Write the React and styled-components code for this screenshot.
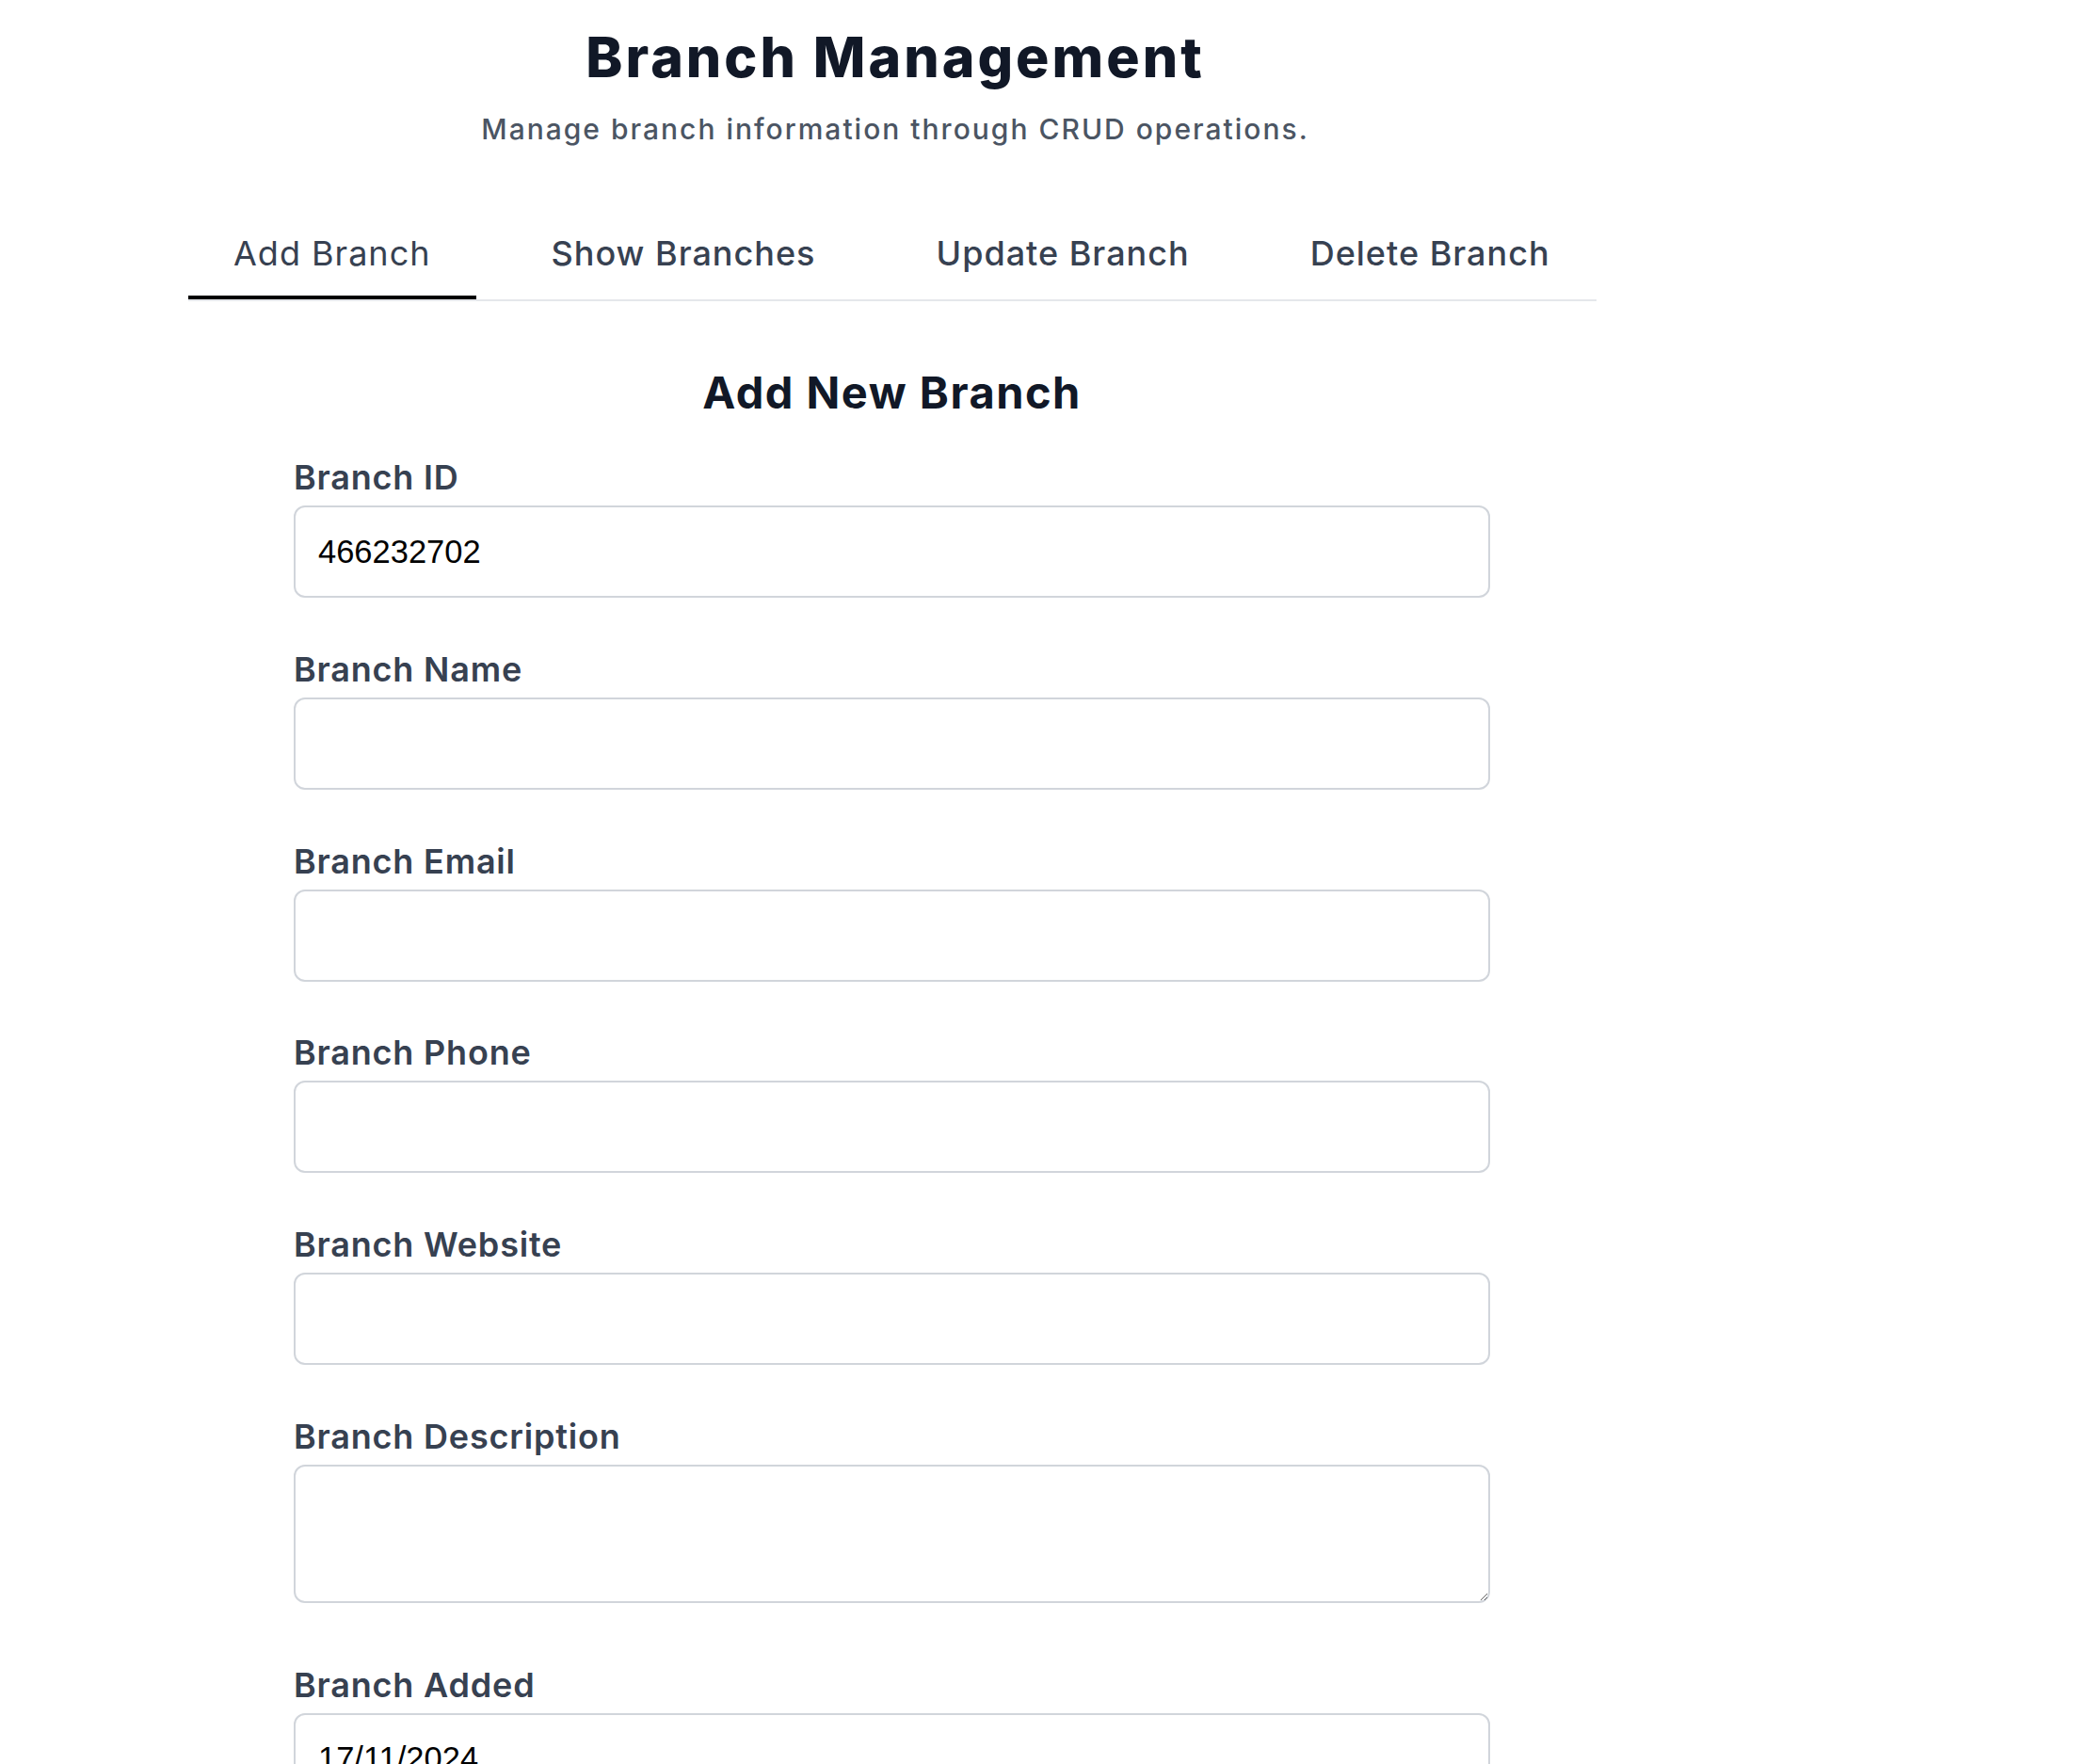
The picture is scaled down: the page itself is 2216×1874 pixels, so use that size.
import React from 'react';
import styled, { createGlobalStyle } from 'styled-components';

const tabs = ['Add Branch', 'Show Branches', 'Update Branch', 'Delete Branch'];

const fields = [
  { label: 'Branch ID', value: '466232702' },
  { label: 'Branch Name', value: '' },
  { label: 'Branch Email', value: '' },
  { label: 'Branch Phone', value: '' },
  { label: 'Branch Website', value: '' },
  { label: 'Branch Description', multiline: true },
  { label: 'Branch Added', value: '17/11/2024' },
];

const App = () => {
  return (
    <>
      <GlobalStyle />
      <Page>
        <Container>
          <Header>
            <Title>Branch Management</Title>
            <Subtitle>Manage branch information through CRUD operations.</Subtitle>
          </Header>

          <TabList>
            {tabs.map((tab, i) => (
              <Tab key={tab} active={i === 0}>
                {tab}
              </Tab>
            ))}
          </TabList>

          <Panel>
            <FormHeading>Add New Branch</FormHeading>
            <Form onSubmit={(e) => e.preventDefault()}>
              {fields.map((f) => (
                <Field key={f.label}>
                  <Label>{f.label}</Label>
                  {f.multiline ? (
                    <TextArea />
                  ) : (
                    <Input type="text" defaultValue={f.value} />
                  )}
                </Field>
              ))}
            </Form>
          </Panel>
        </Container>
      </Page>
    </>
  );
};

const GlobalStyle = createGlobalStyle`
  body {
    margin: 0;
    background: #fff;
    font-family: Inter, "Noto Sans", sans-serif;
  }
  * {
    box-sizing: border-box;
  }
`;

const Page = styled.div`
  min-height: 100vh;
  padding: 31px 0 0 200px;
`;

const Container = styled.div`
  width: 1496px;
`;

const Header = styled.header`
  text-align: center;
  margin-bottom: 64px;
  padding-left: 6px;
`;

const Title = styled.h1`
  margin: 0;
  font-size: 59px;
  line-height: 60px;
  font-weight: 800;
  letter-spacing: 3px;
  color: #111827;
`;

const Subtitle = styled.p`
  margin: 24px 0 0;
  font-size: 30px;
  line-height: 45px;
  font-weight: 500;
  letter-spacing: 2px;
  color: #4b5563;
`;

const TabList = styled.div`
  display: flex;
  gap: 32px;
  border-bottom: 2px solid #e5e7eb;
`;

const Tab = styled.button`
  padding: 18px 48px;
  border: none;
  border-bottom: 4px solid ${(p) => (p.active ? '#000' : 'transparent')};
  background: none;
  font-family: inherit;
  font-size: 36px;
  line-height: 54px;
  font-weight: ${(p) => (p.active ? 400 : 500)};
  letter-spacing: 1px;
  color: #374151;
  cursor: pointer;
`;

const Panel = styled.section`
  width: 1271px;
  margin-left: 112px;
`;

const FormHeading = styled.h2`
  margin: 69px 0 35px;
  text-align: center;
  font-size: 47px;
  line-height: 56px;
  font-weight: 700;
  letter-spacing: 1.5px;
  color: #111827;
`;

const Form = styled.form`
  display: flex;
  flex-direction: column;
  gap: 48.8px;
`;

const Field = styled.div`
  display: flex;
  flex-direction: column;
`;

const Label = styled.label`
  margin-bottom: 3px;
  font-size: 36px;
  line-height: 54px;
  font-weight: 600;
  letter-spacing: 0.8px;
  color: #374151;
`;

const Input = styled.input`
  height: 98px;
  padding: 0 24px;
  border: 2px solid #d1d5db;
  border-radius: 12px;
  font-family: "Liberation Sans", Arial, sans-serif;
  font-size: 34.5px;
  color: #000;
  outline: none;
`;

const TextArea = styled.textarea`
  display: block;
  height: 147px;
  margin-bottom: 11px;
  padding: 12px 24px;
  border: 2px solid #d1d5db;
  border-radius: 12px;
  font-family: "Liberation Sans", Arial, sans-serif;
  font-size: 34.5px;
  outline: none;
`;

export default App;
